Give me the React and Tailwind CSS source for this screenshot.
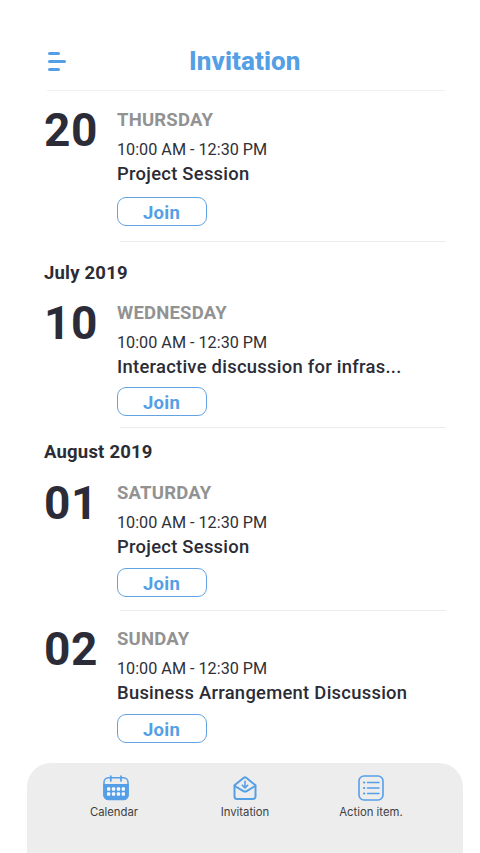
import React from 'react';

const groups = [
  {
    month: '',
    className: 'pt-[17px]',
    monthClass: '',
    items: [
      { date: '20', day: 'THURSDAY', title: 'Project Session', button: 'mt-[11px]', line: 'mt-[15px] border-b' },
    ],
  },
  {
    month: 'July 2019',
    className: 'pt-[19px]',
    monthClass: 'mb-4',
    items: [
      { date: '10', day: 'WEDNESDAY', title: 'Interactive discussion for infras...', button: 'mt-2', line: 'mt-[11px] border-b' },
    ],
  },
  {
    month: 'August 2019',
    className: 'pt-3',
    monthClass: 'mb-[17px]',
    items: [
      { date: '01', day: 'SATURDAY', title: 'Project Session', button: 'mt-[9px]', line: 'mt-[13px] mb-4 border-b' },
      { date: '02', day: 'SUNDAY', title: 'Business Arrangement Discussion', button: 'mt-[9px]', line: '' },
    ],
  },
];

const CalendarIcon = () => (
  <svg width="26" height="26" viewBox="0 0 26 26" fill="none">
    <rect x="1" y="2.8" width="24" height="21.8" rx="4.5" stroke="#559fe6" strokeWidth="1.5" />
    <path d="M.3 9h25.4v10.9a5.2 5.2 0 0 1-5.2 5.2h-15a5.2 5.2 0 0 1-5.2-5.2z" fill="#559fe6" />
    <path d="M7.8 1v5M18 1v5" stroke="#559fe6" strokeWidth="1.7" strokeLinecap="round" />
    {[12.2, 17.2].map((y) =>
      [4, 8.9, 13.8, 18.7].map((x) => (
        <rect key={`${x}-${y}`} x={x} y={y} width="3.3" height="3.5" rx="1" fill="#f5f9ff" />
      ))
    )}
  </svg>
);

const InvitationIcon = () => (
  <svg width="26" height="26" viewBox="0 0 26 26" fill="none" stroke="#559fe6" strokeWidth="2" strokeLinecap="round" strokeLinejoin="round">
    <path d="M2.5 10.3 11.8 2.8a2 2 0 0 1 2.4 0l9.3 7.5v11.2a2.5 2.5 0 0 1-2.5 2.5H5a2.5 2.5 0 0 1-2.5-2.5z" />
    <path d="m2.8 11 8.5 5.1a3.3 3.3 0 0 0 3.4 0l8.5-5.1" />
    <path d="M13 6.3v6.5M10.3 10.2 13 12.9l2.7-2.7" strokeWidth="1.6" />
  </svg>
);

const ActionIcon = () => (
  <svg width="26" height="26" viewBox="0 0 26 26" fill="none" stroke="#559fe6" strokeLinecap="round">
    <rect x="1" y="1" width="24" height="24" rx="5" strokeWidth="1.6" />
    <path d="M9.5 7.5H21M9.5 13H21M9.5 18.5H21" strokeWidth="1.5" />
    <path d="M6 7.5h.2M6 13h.2M6 18.5h.2" strokeWidth="2.2" />
  </svg>
);

const tabs = [
  { label: 'Calendar', icon: <CalendarIcon />, className: 'ml-[55px] w-16', iconClass: 'pl-1' },
  { label: 'Invitation', icon: <InvitationIcon />, className: 'ml-[67px] w-16', iconClass: '' },
  { label: 'Action item.', icon: <ActionIcon />, className: 'ml-[54px] w-20', iconClass: '' },
];

const InvitationItem = ({ item }) => (
  <div className="flex">
    <div className="w-[73px] shrink-0 pt-[3px] text-[46px] leading-[38px] font-bold tracking-[0.5px] text-[#2b2c38]">
      {item.date}
    </div>
    <div className="flex-1">
      <div className="text-[18.5px] leading-6 font-bold tracking-[0.2px] text-[#929292]">{item.day}</div>
      <div className="mt-2 text-[16.2px] leading-5 text-[#303038]">10:00 AM - 12:30 PM</div>
      <div className="mt-0.5 text-[18.4px] leading-6 font-medium tracking-[0.27px] whitespace-nowrap text-[#2b2c35]">
        {item.title}
      </div>
      <button
        className={`block h-[29px] w-[90px] rounded-[9px] border-[1.5px] border-[#62a4e2] pt-px pr-px text-[18.5px] leading-[28px] font-bold tracking-[0.3px] text-[#559fe6] ${item.button}`}
      >
        Join
      </button>
      <div className={`ml-[3px] border-[#ececec] ${item.line}`} />
    </div>
  </div>
);

const App = () => {
  return (
    <div className="flex h-[853px] w-[480px] flex-col overflow-hidden bg-white font-['Roboto',sans-serif]">
      <header className="mr-[35px] ml-[47px] flex h-[91px] shrink-0 items-end border-b border-[#f0f0f0] pb-[13px]">
        <button aria-label="Menu" className="flex h-8 w-[142px] flex-col justify-center gap-[5px]">
          <span className="ml-[1px] h-[3px] w-3 rounded-full bg-[#559fe6]" />
          <span className="ml-[1px] h-[3px] w-[18px] rounded-full bg-[#559fe6]" />
          <span className="ml-[1px] h-[3px] w-3 rounded-full bg-[#559fe6]" />
        </button>
        <h1 className="text-[26px] leading-8 font-extrabold tracking-[0.1px] text-[#559fe6]">Invitation</h1>
      </header>

      <main className="mr-[34px] ml-11 flex-1">
        {groups.map((group) => (
          <section key={group.month} className={group.className}>
            {group.month && (
              <h2 className={`text-[18.5px] leading-6 font-bold tracking-[0.2px] text-[#2b2c35] ${group.monthClass}`}>
                {group.month}
              </h2>
            )}
            {group.items.map((item) => (
              <InvitationItem key={item.date} item={item} />
            ))}
          </section>
        ))}
      </main>

      <nav className="mr-[17px] ml-[27px] flex h-[90px] shrink-0 rounded-t-[24px] bg-[#ededed] pt-3">
        {tabs.map((tab) => (
          <div key={tab.label} className={`flex flex-col items-center ${tab.className}`}>
            <div className={tab.iconClass}>{tab.icon}</div>
            <div className="mt-[3px] font-['Inter',sans-serif] text-[11.3px] leading-4 whitespace-nowrap text-[#404040]">
              {tab.label}
            </div>
          </div>
        ))}
      </nav>
    </div>
  );
};

export default App;
